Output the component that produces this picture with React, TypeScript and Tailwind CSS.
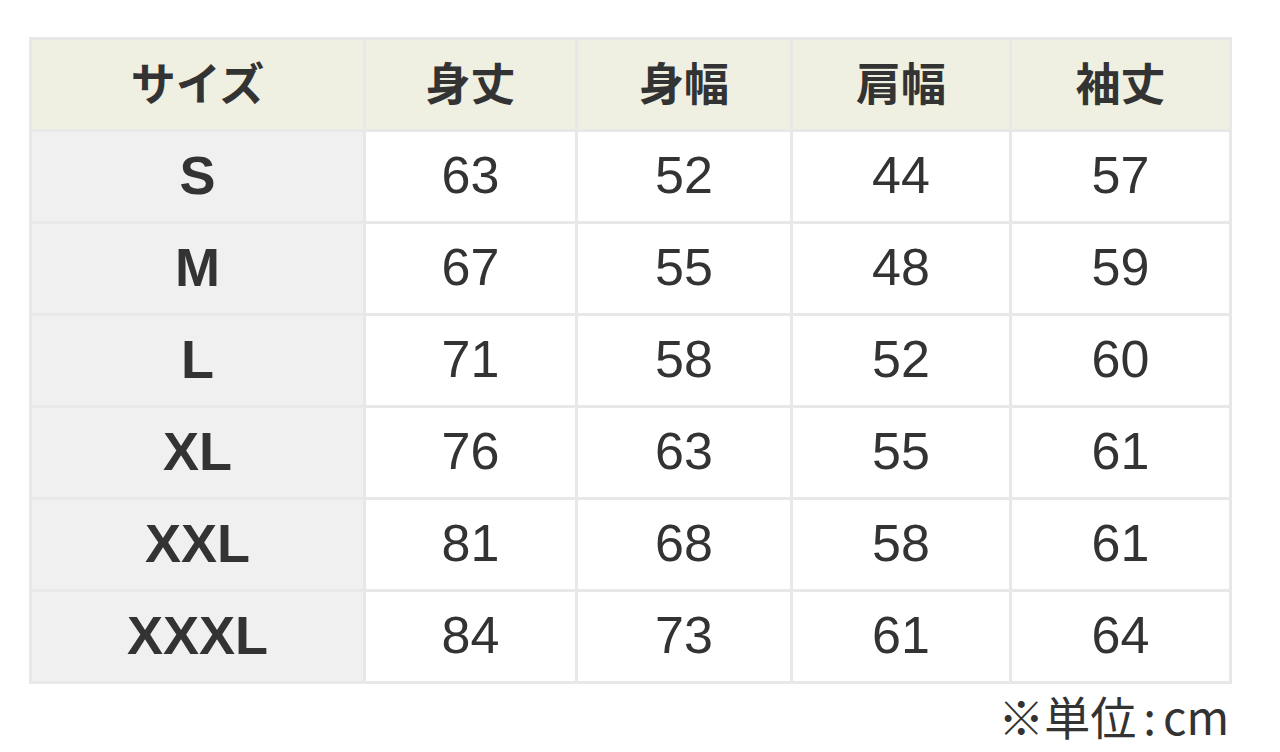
import React from 'react';

const headers = ['サイズ', '身丈', '身幅', '肩幅', '袖丈'];

const rows: [string, number, number, number, number][] = [
  ['S', 63, 52, 44, 57],
  ['M', 67, 55, 48, 59],
  ['L', 71, 58, 52, 60],
  ['XL', 76, 63, 55, 61],
  ['XXL', 81, 68, 58, 61],
  ['XXXL', 84, 73, 61, 64],
];

export default function App() {
  return (
    <div className="w-[1280px] h-[752px] bg-white pl-[29px] pt-[37px] text-[#333333]">
      <div className="w-[1203px]">
        <div className="grid grid-cols-[331px_209px_212px_216px_217px] auto-rows-[89px] gap-[3px] p-[3px] bg-[#e8e8e8]">
          {headers.map((h) => (
            <div
              key={h}
              className="flex items-center justify-center pb-[6px] bg-[#efefe2] text-[45px] font-bold leading-none font-['Noto_Sans_CJK_JP','Noto_Sans',sans-serif]"
            >
              {h}
            </div>
          ))}
          {rows.map(([size, ...vals]) => (
            <React.Fragment key={size}>
              <div className="flex items-center justify-center pb-[4px] bg-[#f0f0f0] text-[54px] font-bold leading-none font-['Liberation_Sans',Arial,sans-serif]">
                {size}
              </div>
              {vals.map((v, i) => (
                <div
                  key={i}
                  className="flex items-center justify-center pb-[4px] bg-white text-[52px] leading-none font-['Liberation_Sans',Arial,sans-serif]"
                >
                  {v}
                </div>
              ))}
            </React.Fragment>
          ))}
        </div>
        <div className="flex justify-end pr-[3px] mt-[8px] text-[46px] leading-none font-['Noto_Sans_CJK_JP','Noto_Sans',sans-serif]">
          ※単位<span className="mx-[7px]">:</span>cm
        </div>
      </div>
    </div>
  );
}
